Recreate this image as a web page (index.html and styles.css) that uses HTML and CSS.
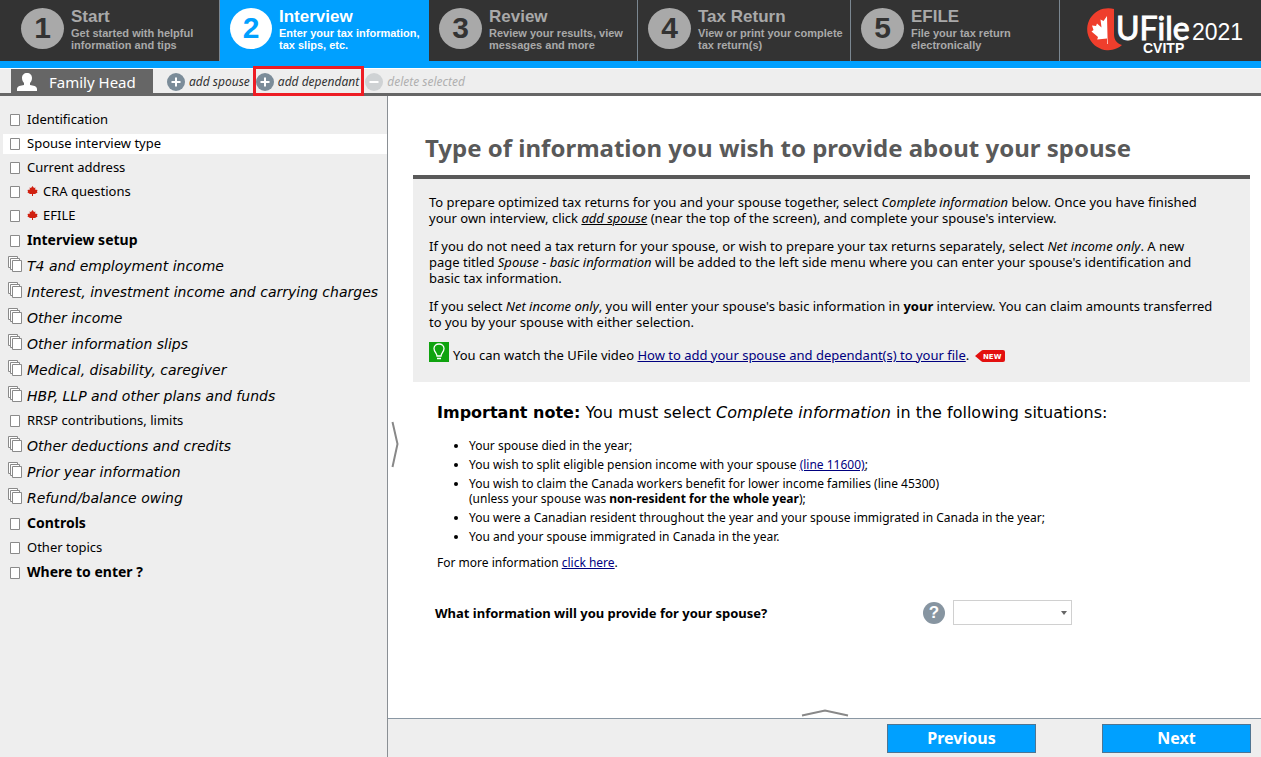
FILE: index.html
```html
<!DOCTYPE html>
<html lang="en">
<head>
<meta charset="utf-8">
<meta name="viewport" content="width=device-width, initial-scale=1">
<title>UFile CVITP 2021</title>
<link rel="stylesheet" href="styles.css">
</head>
<body>
<svg class="sprite" aria-hidden="true">
  <symbol id="page" viewBox="0 0 14 16"><path d="M2.500 3.500h9v11h-9z" fill="#fff" stroke="#8a8a8a"/></symbol>
  <symbol id="pages" viewBox="0 0 14 16"><g fill="#fff" stroke="#8a8a8a"><path d="M.5.500h9v11h-9z"/><path d="M2.500 2.500h9v11h-9z"/><path d="M4.500 4.500h9v11h-9z"/></g></symbol>
  <symbol id="leaf" viewBox="0 0 20 20"><path d="M10 0l3 4 3-1-1 4 5 1-1 3 1 2-5 3h-4v4H9v-4H5l-5-3 1-2-1-3 5-1-1-4 3 1z" fill="#d02010"/></symbol>
  <symbol id="plus" viewBox="0 0 18 18"><circle cx="9" cy="9" r="9" fill="#7b8c99"/><path d="M9 4.500v9M4.500 9h9" stroke="#fff" stroke-width="2"/></symbol>
  <symbol id="minus" viewBox="0 0 18 18"><circle cx="9" cy="9" r="9" fill="#cfd2d4"/><path d="M4.500 9h9" stroke="#fff" stroke-width="2"/></symbol>
</svg>

<header class="steps">
  <a class="step" href="#start"><span class="num">1</span><span class="info"><strong>Start</strong><span>Get started with helpful<br>information and tips</span></span></a>
  <a class="step active" href="#interview" aria-current="step"><span class="num">2</span><span class="info"><strong>Interview</strong><span>Enter your tax information,<br>tax slips, etc.</span></span></a>
  <a class="step" href="#review"><span class="num">3</span><span class="info"><strong>Review</strong><span>Review your results, view<br>messages and more</span></span></a>
  <a class="step" href="#return"><span class="num">4</span><span class="info"><strong>Tax Return</strong><span>View or print your complete<br>tax return(s)</span></span></a>
  <a class="step" href="#efile"><span class="num">5</span><span class="info"><strong>EFILE</strong><span>File your tax return<br>electronically</span></span></a>
  <div class="brand">
    <svg class="logo" viewBox="0 0 102 50" role="img" aria-label="UFile CVITP">
      <path d="M28 2A21 21 0 1 0 36 38C30 36 28 32 28 27Z" fill="#ef3e2c"/>
      <path d="M21 9l-3.500 5-3-1.500 1 8-4.500-4-1 2.500-4-.5 1.500 4.500-2 1.500 6.500 5.500-.8 2.500 9.800-1V37h.7z" fill="#fff"/>
      <text class="logo-name" x="30" y="33">UFile</text>
      <text class="logo-sub" x="57" y="46">CVITP</text>
    </svg>
    <span class="year">2021</span>
  </div>
</header>

<nav class="people" aria-label="Family members">
  <button class="person" type="button">
    <svg width="20" height="18" viewBox="0 0 20 18"><path d="M10 0c3 0 5 2 5 5 0 2-1 4-2 5v2c3 .6 7 1 7 4v2H0v-2c0-3 4-3.400 7-4v-2C6 9 5 7 5 5c0-3 2-5 5-5z" fill="#fff"/></svg>
    Family Head
  </button>
  <button class="act" type="button"><svg width="18" height="18"><use href="#plus"/></svg>add spouse</button>
  <button class="act marked" type="button"><svg width="18" height="18"><use href="#plus"/></svg>add dependant</button>
  <button class="act" type="button" disabled><svg width="18" height="18"><use href="#minus"/></svg>delete selected</button>
</nav>

<div class="body">
  <nav class="side" aria-label="Interview pages">
    <a class="item" href="#p"><svg class="pg"><use href="#page"/></svg>Identification</a>
    <a class="item current" href="#p"><svg class="pg"><use href="#page"/></svg>Spouse interview type</a>
    <a class="item" href="#p"><svg class="pg"><use href="#page"/></svg>Current address</a>
    <a class="item" href="#p"><svg class="pg"><use href="#page"/></svg><svg class="leaf"><use href="#leaf"/></svg>CRA questions</a>
    <a class="item" href="#p"><svg class="pg"><use href="#page"/></svg><svg class="leaf"><use href="#leaf"/></svg>EFILE</a>
    <a class="item head" href="#p"><svg class="pg"><use href="#page"/></svg>Interview setup</a>
    <a class="item group" href="#p"><svg class="pg"><use href="#pages"/></svg>T4 and employment income</a>
    <a class="item group" href="#p"><svg class="pg"><use href="#pages"/></svg>Interest, investment income and carrying charges</a>
    <a class="item group" href="#p"><svg class="pg"><use href="#pages"/></svg>Other income</a>
    <a class="item group" href="#p"><svg class="pg"><use href="#pages"/></svg>Other information slips</a>
    <a class="item group" href="#p"><svg class="pg"><use href="#pages"/></svg>Medical, disability, caregiver</a>
    <a class="item group" href="#p"><svg class="pg"><use href="#pages"/></svg>HBP, LLP and other plans and funds</a>
    <a class="item" href="#p"><svg class="pg"><use href="#page"/></svg>RRSP contributions, limits</a>
    <a class="item group" href="#p"><svg class="pg"><use href="#pages"/></svg>Other deductions and credits</a>
    <a class="item group" href="#p"><svg class="pg"><use href="#pages"/></svg>Prior year information</a>
    <a class="item group" href="#p"><svg class="pg"><use href="#pages"/></svg>Refund/balance owing</a>
    <a class="item head" href="#p"><svg class="pg"><use href="#page"/></svg>Controls</a>
    <a class="item" href="#p"><svg class="pg"><use href="#page"/></svg>Other topics</a>
    <a class="item head" href="#p"><svg class="pg"><use href="#page"/></svg>Where to enter ?</a>
  </nav>

  <div class="right">
    <button class="handle-side" type="button" aria-label="Resize menu"><svg width="8" height="48"><path d="M1.500 1l5 22-5 23" fill="none" stroke="#888" stroke-width="2"/></svg></button>
    <main class="content">
      <h1>Type of information you wish to provide about your spouse</h1>
      <section class="panel">
        <p>To prepare optimized tax returns for you and your spouse together, select <em>Complete information</em> below. Once you have finished<br>your own interview, click <em><u>add spouse</u></em> (near the top of the screen), and complete your spouse's interview.</p>
        <p>If you do not need a tax return for your spouse, or wish to prepare your tax returns separately, select <em>Net income only</em>. A new<br>page titled <em>Spouse - basic information</em> will be added to the left side menu where you can enter your spouse's identification and<br>basic tax information.</p>
        <p>If you select <em>Net income only</em>, you will enter your spouse's basic information in <b>your</b> interview. You can claim amounts transferred<br>to you by your spouse with either selection.</p>
        <p class="video"><svg width="20" height="20" viewBox="0 0 20 20"><path d="M0 0h20v20H0z" fill="#0fa30f"/><path d="M8 14c0-3-3-4-3-7.500a5 4.500 0 0 1 10 0C15 10 12 11 12 14zM8 16.500h4" fill="none" stroke="#fff" stroke-width="1.300"/></svg><span>You can watch the UFile video <a href="#video">How to add your spouse and dependant(s) to your file</a>.</span><svg class="badge" width="30" height="12" viewBox="0 0 30 12" role="img" aria-label="New"><path d="M0 6l6-5q1-1 2-1h20q2 0 2 2v8q0 2-2 2H8q-1 0-2-1z" fill="#e3100f"/><text class="new" x="8" y="9">NEW</text></svg></p>
      </section>
      <section class="note">
        <h2><b>Important note:</b> You must select <em>Complete information</em> in the following situations:</h2>
        <ul>
          <li>Your spouse died in the year;</li>
          <li>You wish to split eligible pension income with your spouse <a href="#l">(line 11600)</a>;</li>
          <li>You wish to claim the Canada workers benefit for lower income families (line 45300)<br>(unless your spouse was <b>non-resident for the whole year</b>);</li>
          <li>You were a Canadian resident throughout the year and your spouse immigrated in Canada in the year;</li>
          <li>You and your spouse immigrated in Canada in the year.</li>
        </ul>
        <p>For more information <a href="#m">click here</a>.</p>
      </section>
      <div class="question">
        <label for="info">What information will you provide for your spouse?</label>
        <button class="help" type="button" aria-label="Help">?</button>
        <span class="pick">
          <select id="info"><option></option><option>Complete information</option><option>Net income only</option></select>
          <svg class="caret" width="6" height="4"><path d="M0 0h6L3 4z" fill="#666"/></svg>
        </span>
      </div>
    </main>
    <footer class="foot">
      <button class="handle-foot" type="button" aria-label="Show panel"><svg width="48" height="8"><path d="M1 6.500l23-5 23 5" fill="none" stroke="#888" stroke-width="2"/></svg></button>
      <button class="go" type="button">Previous</button>
      <button class="go" type="button">Next</button>
    </footer>
  </div>
</div>
</body>
</html>
```
FILE: styles.css
```css
* { box-sizing: border-box; }
body {
  margin: 0;
  min-height: 100vh;
  display: flex;
  flex-direction: column;
  background: #fff;
  color: #000;
  font: 13px/16px "Noto Sans", sans-serif;
}
button { border: 0; padding: 0; background: none; font: inherit; color: inherit; }
svg { display: block; flex: none; }
.sprite { position: absolute; width: 0; height: 0; }
h1, h2, p, ul { margin: 0; }
a { color: #00007f; }

/* Step bar */
.steps {
  display: grid;
  grid-template-columns: 219fr 210fr 208fr 213fr 209fr 202fr;
  background: #333;
  border-bottom: 7px solid #00a0ff;
  font-family: "Liberation Sans", Arial, sans-serif;
}
.step {
  display: flex;
  gap: 7px;
  height: 61px;
  padding: 8px 0 0 10px;
  border-left: 1px solid #7b8791;
  color: #a9a9a9;
  text-decoration: none;
  white-space: nowrap;
}
.step:first-child { border-left: 0; padding-left: 21px; }
.active { background: #00a0ff; color: #fff; }
.active + .step { border-left: 0; }
.num {
  width: 43px;
  height: 41px;
  border-radius: 50%;
  background: #a9a9a9;
  color: #333;
  font: bold 30px/40px "Liberation Sans", Arial, sans-serif;
  text-align: center;
}
.active .num { width: 42px; background: #fff; color: #00a0ff; }
.info { font-size: 11px; font-weight: bold; line-height: 12px; }
.info strong { display: block; font-size: 17px; line-height: 17px; margin-bottom: 2px; }
.brand { display: flex; gap: 4px; padding: 7px 0 0 26px; border-left: 1px solid #7b8791; }
.logo { width: 102px; height: 50px; overflow: visible; }
.logo-name { font: 32px Lato, sans-serif; fill: #fff; stroke: #fff; stroke-width: 1px; }
.logo-sub { font: bold 14px "Liberation Sans", sans-serif; fill: #fff; }
.year { color: #fff; font-size: 23px; line-height: 50px; }

/* Family member bar */
.people {
  display: flex;
  align-items: center;
  height: 28px;
  padding-left: 11px;
  background: #eee;
  border-top: 1px solid #fff;
  border-bottom: 3px solid #666;
  font-size: 12px;
}
.person {
  display: flex;
  align-items: center;
  gap: 12px;
  width: 142px;
  height: 24px;
  padding: 2px 0 0 6px;
  background: #666;
  color: #fff;
  font-size: 15px;
}
.act {
  display: flex;
  align-items: center;
  gap: 4px;
  height: 24px;
  padding-top: 2px;
  font-style: italic;
  color: #333;
}
.person + .act { margin: 0 6px 0 14px; }
.marked { outline: 3px solid #ed1c24; padding-right: 2px; margin-right: 4px; z-index: 1; }
.act:disabled { color: #b0b0b0; }

/* Left menu */
.body { flex: 1; display: flex; }
.side {
  flex: none;
  width: 388px;
  display: flex;
  flex-direction: column;
  gap: 4px;
  padding: 14px 0 20px 3px;
  background: #eee;
  border-right: 1px solid #8a8f94;
}
.item {
  display: flex;
  align-items: center;
  gap: 5px;
  height: 20px;
  padding: 0 0 2px 5px;
  color: #000;
  text-decoration: none;
  white-space: nowrap;
}
.pg { width: 14px; height: 16px; }
.leaf { width: 11px; height: 10px; }
.current { background: #fff; }
.head { height: 21px; font-size: 14px; font-weight: bold; }
.group { height: 22px; padding-bottom: 0; font: italic 14px/18px "DejaVu Sans", sans-serif; }
.group .pg { margin-bottom: 4px; }

/* Right side */
.right { position: relative; flex: 1; min-width: 0; display: flex; flex-direction: column; }
.handle-side { position: absolute; left: 3px; top: 325px; }
.content { flex: 1; padding: 37px 11px 20px 25px; }
h1 { padding-left: 12px; color: #595959; font: bold 24px/29px "Noto Sans", sans-serif; }
.panel {
  margin-top: 13px;
  padding: 15px 16px 19px;
  background: #eee;
  border-top: 4px solid #595959;
}
.panel p + p { margin-top: 12px; }
.video { display: flex; align-items: flex-start; gap: 4px; }
.video span { padding-top: 5px; }
.badge { margin: 8px 0 0 2px; }
.new { font: bold 7px "DejaVu Sans", sans-serif; fill: #fff; }
.note { padding: 21px 0 0 24px; font-size: 12px; line-height: 15px; }
h2 { font: 16px/20px "DejaVu Sans", sans-serif; }
ul { padding: 15px 0 0 32px; }
li { margin-bottom: 4px; }
.note p { padding-top: 7px; }
.question {
  display: flex;
  align-items: center;
  padding: 30px 0 0 22px;
  font-size: 13px;
  font-weight: bold;
}
.question label { flex: 0 0 488px; }
.help {
  width: 22px;
  height: 22px;
  border-radius: 50%;
  background: #8795a1;
  color: #fff;
  font: bold 17px/22px "Liberation Sans", sans-serif;
}
.pick { position: relative; margin-left: 8px; }
select {
  display: block;
  width: 119px;
  height: 25px;
  appearance: none;
  border: 1px solid #d0d0d0;
  border-radius: 0;
  background: #fff;
}
.caret { position: absolute; right: 5px; top: 11px; pointer-events: none; }

.foot {
  position: relative;
  display: flex;
  justify-content: flex-end;
  gap: 66px;
  padding: 5px 10px 4px;
  background: #eee;
  border-top: 1px solid #8a97a3;
}
.handle-foot { position: absolute; left: 413px; top: -10px; }
.go {
  width: 149px;
  height: 29px;
  background: #00a0ff;
  border: 1px solid #4f7592;
  color: #fff;
  font: bold 16px/27px "Noto Sans", sans-serif;
}
```
